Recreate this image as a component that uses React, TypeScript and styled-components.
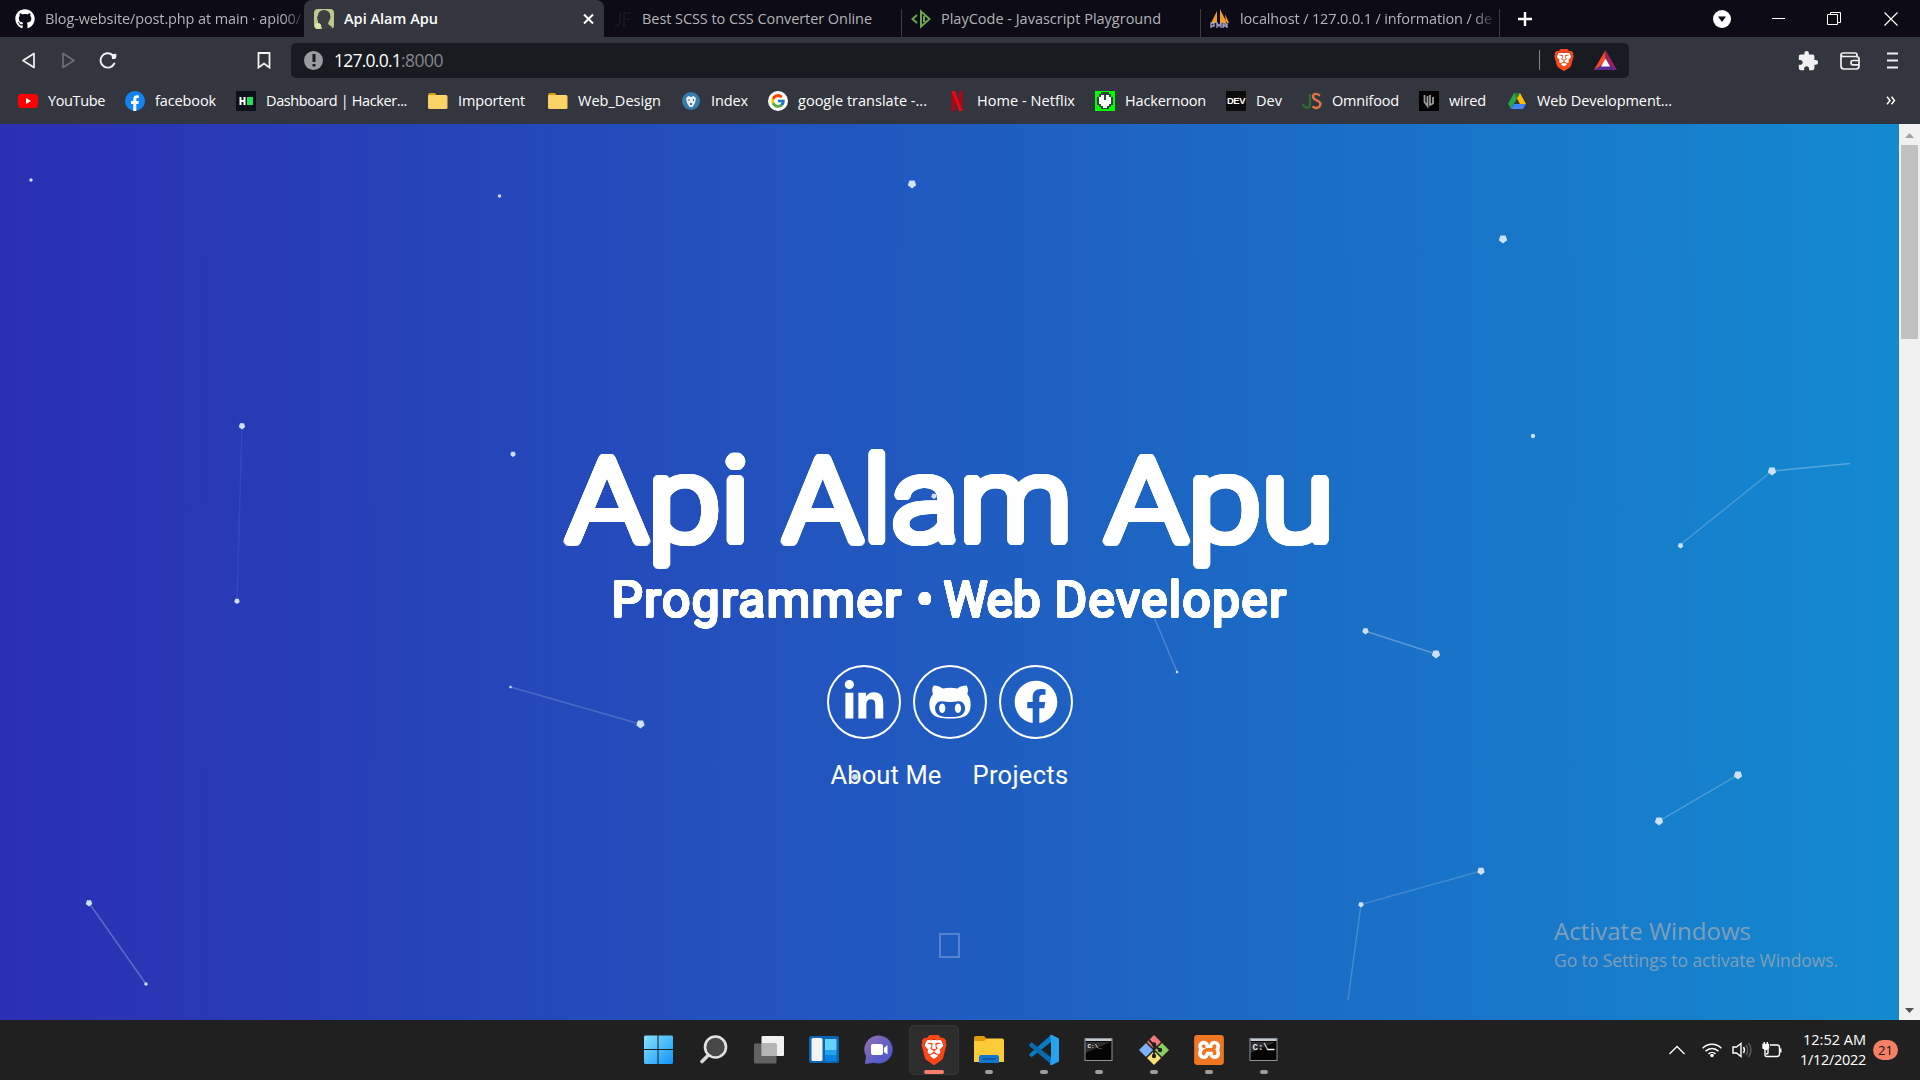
import React, { useLayoutEffect, useRef, useState } from 'react';
import styled, { createGlobalStyle } from 'styled-components';
import { FaLinkedinIn, FaGithubAlt, FaFacebook, FaGithub } from 'react-icons/fa';
import { MdExtension } from 'react-icons/md';
import { SiBrave, SiXampp } from 'react-icons/si';
import { FcGoogle } from 'react-icons/fc';

const ui = `'Open Sans', 'Noto Sans', sans-serif`;

const Global = createGlobalStyle`
  * { box-sizing: border-box; }
  body { margin: 0; background: #202020; overflow: hidden; font-family: ${ui}; }
  svg { display: block; flex: none; }
`;

/* A single line of text that fills a given width, by tracking or by stretching its letters. */
const Line = styled.span`
  display: block;
  flex: none;
  width: max-content;
  white-space: pre;
  transform-origin: 0 50%;
`;
const Fit: React.FC<{ w: number; stretch?: boolean; children: string }> = ({ w, stretch, children }) => {
  const ref = useRef<HTMLSpanElement>(null);
  const [natural, setNatural] = useState(w);
  useLayoutEffect(() => {
    if (ref.current) setNatural(ref.current.getBoundingClientRect().width);
  }, [children]);
  return (
    <Line
      ref={ref}
      style={
        stretch
          ? { transform: `scaleX(${w / natural})`, marginRight: w - natural }
          : { letterSpacing: (w - natural) / children.length }
      }
    >
      {children}
    </Line>
  );
};

const Screen = styled.div`
  width: 1920px;
  height: 1080px;
  display: flex;
  flex-direction: column;
  background: #33353f;
  overflow: hidden;
`;

/* ---------- tab strip ---------- */
const TabStrip = styled.div`
  height: 37px;
  flex: none;
  display: flex;
  background: #0c0b16;
`;
const Tab = styled.div<{ $w: number; $active?: boolean; $line?: boolean; $pad?: number }>`
  width: ${p => p.$w}px;
  height: 37px;
  display: flex;
  align-items: center;
  gap: 10px;
  padding-left: ${p => p.$pad ?? 9}px;
  overflow: hidden;
  font-size: 14.5px;
  font-weight: ${p => (p.$active ? 600 : 400)};
  color: ${p => (p.$active ? '#ffffff' : '#b3b3b8')};
  background: ${p => (p.$active ? '#33353f' : 'transparent')};
  border-radius: ${p => (p.$active ? '8px 8px 0 0' : '0')};
  ${p => p.$line && 'background: linear-gradient(#3c3c42, #3c3c42) right 9px / 1px 28px no-repeat;'}
`;
const FadeText = styled.div<{ $w: number }>`
  width: ${p => p.$w}px;
  overflow: hidden;
  mask-image: linear-gradient(to right, #000 calc(100% - 20px), rgba(0, 0, 0, 0.1));
`;
const Spring = styled.div`
  flex: 1;
`;
const WindowButtons = styled.div`
  display: flex;
  align-items: center;
  flex: 1;
  padding-left: 17px;
`;
const Caption = styled.div<{ $w?: number }>`
  width: ${p => p.$w ?? 56}px;
  display: flex;
  justify-content: center;
`;

/* ---------- toolbar ---------- */
const Toolbar = styled.div`
  height: 47px;
  flex: none;
  display: flex;
  align-items: center;
  padding: 0 22px;
`;
const NavIcons = styled.div`
  width: 269px;
  display: flex;
  align-items: center;
  gap: 27px;
`;
const ReloadSlot = styled.div`
  margin-left: -3px;
`;
const BookmarkSlot = styled.div`
  margin-left: 112px;
`;
const Address = styled.div`
  width: 1338px;
  height: 35px;
  margin-top: -1px;
  border-radius: 5px;
  background: #191b22;
  display: flex;
  align-items: center;
  padding: 0 12px 0 13px;
  font-size: 17.5px;
  color: #ffffff;
`;
const InfoDot = styled.div`
  width: 19px;
  height: 19px;
  border-radius: 50%;
  background: #9b9ca3;
  display: flex;
  align-items: center;
  justify-content: center;
  margin-right: 11px;
`;
const Port = styled.span`
  color: #85868b;
`;
const Rule = styled.div`
  width: 1px;
  height: 20px;
  background: #84858a;
  margin-right: 14px;
`;
const Shields = styled.div`
  display: flex;
  align-items: center;
  gap: 20px;
`;
const Tools = styled.div`
  flex: 1;
  display: flex;
  align-items: center;
  justify-content: flex-end;
  gap: 21px;
  color: #f1f1f1;
`;
const MenuSlot = styled.div`
  margin-left: 5px;
`;

/* ---------- bookmarks ---------- */
const Bookmarks = styled.div`
  height: 40px;
  flex: none;
  display: flex;
  align-items: center;
  gap: 20px;
  padding: 0 24px 7px 18px;
  color: #ffffff;
  font-size: 14.5px;
`;
const Bookmark = styled.div<{ $after: number }>`
  display: flex;
  align-items: center;
  gap: 10px;
  margin-right: ${p => p.$after}px;
`;
const Tile = styled.div`
  width: 20px;
  height: 20px;
  background: #0b0b0b;
  color: #fff;
  font: 700 9.5px 'Liberation Sans', Arial, sans-serif;
  letter-spacing: -0.5px;
  display: flex;
  align-items: center;
  justify-content: center;
`;

/* ---------- page ---------- */
const Viewport = styled.div`
  height: 896px;
  flex: none;
  display: flex;
`;
const Page = styled.div`
  position: relative;
  width: 1899px;
  height: 896px;
  background: linear-gradient(to right, #2b2fb3 0%, #205bc0 50%, #138ad0 100%);
  overflow: hidden;
`;
const ParticleLayer = styled.svg`
  position: absolute;
  inset: 0;
  pointer-events: none;
`;
const Hero = styled.div`
  display: flex;
  flex-direction: column;
  align-items: center;
  padding-top: 308px;
  color: #fff;
  font-family: Roboto, 'Liberation Sans', sans-serif;
`;
const ring = (r: number) =>
  Array.from({ length: 24 }, (_, i) => {
    const a = (i / 24) * Math.PI * 2;
    return `${(r * Math.cos(a)).toFixed(2)}px ${(r * Math.sin(a)).toFixed(2)}px 0 #fff`;
  }).join(',');
const Title = styled.h1`
  margin: 0;
  height: 138px;
  line-height: 139px;
  display: flex;
  gap: 33px;
  font-size: 117px;
  font-weight: 300;
  text-shadow: ${ring(4.2)}, ${ring(2)};
`;
const Subtitle = styled.h2`
  margin: 0;
  height: 60px;
  line-height: 60px;
  display: flex;
  font-size: 49.5px;
  font-weight: 400;
  gap: 14px;
  text-shadow: ${ring(1.2)};
`;
const Social = styled.div`
  display: flex;
  gap: 12px;
  margin-top: 35px;
`;
const Circle = styled.div`
  width: 74px;
  height: 74px;
  border: 2px solid #fff;
  border-radius: 50%;
  display: flex;
  align-items: center;
  justify-content: center;
`;
const Links = styled.div`
  display: flex;
  gap: 31px;
  margin-top: 20px;
  height: 32px;
  line-height: 32px;
  font-size: 25.5px;
`;
const MissingGlyph = styled.div`
  width: 21px;
  height: 25px;
  margin-top: 142px;
  border: 2px solid rgba(255, 255, 255, 0.24);
`;
const Watermark = styled.div`
  position: absolute;
  left: 1554px;
  top: 790px;
  color: #7f9fb8;
  font-size: 24px;
  line-height: 34px;
`;
const WatermarkSmall = styled.div`
  font-size: 17.5px;
  line-height: 25px;
`;
const Scrollbar = styled.div`
  width: 21px;
  background: #f1f1f1;
  display: flex;
  flex-direction: column;
  align-items: center;
  justify-content: space-between;
  padding: 9px 0 7px;
`;
const Thumb = styled.div`
  width: 17px;
  height: 194px;
  background: #c1c1c1;
  margin: 7px 0 auto;
`;

/* ---------- taskbar ---------- */
const Taskbar = styled.div`
  height: 60px;
  flex: none;
  display: flex;
  background: #202020;
  padding-left: 631px;
`;
const TaskItem = styled.div`
  width: 55px;
  height: 60px;
  padding: 5px 2px 5px 3px;
`;
const TaskFace = styled.div<{ $active: boolean }>`
  width: 50px;
  height: 50px;
  border-radius: 5px;
  background: ${p => (p.$active ? '#2d2d2d' : 'transparent')};
  border: 1px solid ${p => (p.$active ? '#353535' : 'transparent')};
  display: flex;
  flex-direction: column;
  align-items: center;
  justify-content: space-between;
  padding-top: 9px;
`;
const Pip = styled.div<{ $kind: 'none' | 'open' | 'active' }>`
  width: ${p => (p.$kind === 'active' ? 20 : 8)}px;
  height: 4px;
  border-radius: 2px;
  background: ${p => ({ none: 'transparent', open: '#9d9d9d', active: '#f68066' })[p.$kind]};
`;
const Tray = styled.div`
  flex: 1;
  display: flex;
  align-items: center;
  justify-content: flex-end;
  padding-right: 22px;
  gap: 10px;
  color: #fff;
`;
const Clock = styled.div`
  width: 76px;
  display: flex;
  flex-direction: column;
  align-items: flex-end;
  font-size: 14.5px;
  line-height: 20px;
  margin: -1px -3px 0 -2px;
`;
const Badge = styled.div`
  width: 25px;
  height: 20px;
  border-radius: 10px;
  background: #f68066;
  color: #111;
  font-size: 13px;
  line-height: 20px;
  text-align: center;
`;

/* ---------- drawings ---------- */
const Portrait = () => (
  <svg width="20" height="20" viewBox="0 0 20 20">
    <rect width="20" height="20" rx="4" fill="#bcc98d" />
    <path d="M5 3q5-4 10 0 3 5 0 9l-1 3 4 3v2H8l-1-4-3-1V12L3 9z" fill="#3c3e40" />
    <circle cx="4" cy="17" r="3" fill="#dbe5ad" />
  </svg>
);
const PlayCode = () => (
  <svg width="20" height="20" viewBox="0 0 20 20" fill="none" stroke="#6aa84b" strokeWidth="2">
    <path d="M6 6L1.500 10 6 14M10 2.500v15L18.500 10z" />
    <path d="M13 7v6" />
  </svg>
);
const Pma = () => (
  <svg width="20" height="20" viewBox="0 0 20 20">
    <path d="M7 2L1 14h6zM10 0v14h7zM15 5l4 9h-3z" fill="#f29a2e" />
    <path d="M1 19v-5h3v3H1M7 19v-5l2 3 2-3v5M13 19v-4h4v4M13 17h4" fill="none" stroke="#a7a9cf" strokeWidth="1.300" />
  </svg>
);
const YouTube = () => (
  <svg width="20" height="20" viewBox="0 0 20 20">
    <rect y="3" width="20" height="14" rx="3.500" fill="#f00" />
    <path d="M8 7l5 3-5 3z" fill="#fff" />
  </svg>
);
const Facebook = () => (
  <svg width="20" height="20" viewBox="0 0 20 20">
    <circle cx="10" cy="10" r="10" fill="#1184f2" />
    <path d="M8.300 20v-7H6v-3h2.300V8c0-2.600 1.500-3.800 3.600-3.800l2 .2V7h-1.200c-1.100 0-1.400.7-1.400 1.400V10h2.500l-.4 3h-2.100v7z" fill="#fff" />
  </svg>
);
const Folder = () => (
  <svg width="20" height="16" viewBox="0 0 20 16">
    <path d="M0 2q0-2 2-2h5l2 3h9v12H0z" fill="#d99a12" />
    <rect y="2" width="19.500" height="14" rx="1.500" fill="#fbd266" />
  </svg>
);
const IndexIcon = () => (
  <svg width="20" height="20" viewBox="0 0 20 20">
    <circle cx="10" cy="10" r="9" fill="#357eac" />
    <path d="M5 7l2.500-2L10 6l2.500-1L15 7l-1 5-2.500 4h-3L6 12z" fill="#e8eff4" />
    <path d="M7.500 9h1M12 9h1M10 12v2" stroke="#333" strokeWidth="1.500" />
  </svg>
);
const Netflix = () => (
  <svg width="20" height="20" viewBox="0 0 20 20">
    <path d="M4.500 0H8v20H4.500zM12 0h3.500v20H12z" fill="#b1060f" />
    <path d="M4.500 0H8l7.500 20H12z" fill="#e50914" />
  </svg>
);
const Hackernoon = () => (
  <svg width="20" height="20" viewBox="0 0 20 20">
    <rect width="20" height="20" fill="#0f0" />
    <path d="M6 1h8v2h2v3h2v8h-2v2h-2v2H6v-2H4v-2H2V6h2V3h2z" fill="#31453a" />
    <path d="M6 4h3v5h2V4h3v2h2v7h-2v2h-2v2H8v-2H6v-2H4V6h2z" fill="#fff" />
  </svg>
);
const Drive = () => (
  <svg width="20" height="20" viewBox="0 0 20 20">
    <path d="M7 2l3 5.500L4 18 1 12.800z" fill="#2ba24c" />
    <path d="M7 2h6l6 11h-6z" fill="#fbbc05" />
    <path d="M7 13h12l-3 5H4z" fill="#4285f4" />
    <path d="M7 2h6l-3 5.500z" fill="#188038" />
  </svg>
);
const Bat = () => (
  <svg width="23" height="20" viewBox="0 0 23 20">
    <path d="M11.500 0L0 20l11.500-7z" fill="#ff4724" />
    <path d="M11.500 0L23 20l-11.500-7z" fill="#9e1f63" />
    <path d="M0 20h23l-11.500-8z" fill="#5c2d91" />
    <path d="M11.500 8.500l4.500 8H7z" fill="#fff" />
  </svg>
);
const Lion = ({ w, h }: { w: number; h: number }) => (
  <svg width={w} height={h} viewBox="1.400 0 21.200 24" preserveAspectRatio="none">
    <path d="M6 4h12l2 5-4 10-4 2.500L8 19 4 9z" fill="#fff" />
    <SiBrave size={24} color="#fb4618" />
  </svg>
);
const CmdIcon = ({ big }: { big?: boolean }) => (
  <svg width="30" height="30" viewBox="0 0 30 30">
    <rect x="1" y="3.500" width="27" height="22" fill="#050505" stroke="#8e9499" />
    <path d="M1.500 5h26" stroke="#c5cbd0" strokeWidth="2" />
    <path d="M1.500 7h25L1.500 18z" fill="#fff" opacity=".16" />
    <text x="3.500" y={big ? 15 : 12.5} fill="#e8e8e8" fontFamily="Liberation Mono, monospace" fontSize={big ? 9 : 6} fontWeight="700">
      {big ? 'C:\\' : 'C:\\_'}
    </text>
    {big && <path d="M18.500 14.500h7" stroke="#fff" strokeWidth="1.500" />}
  </svg>
);

const icons = {
  start: (
    <svg width="30" height="30" viewBox="0 0 30 30">
      <defs>
        <linearGradient id="win" x2="1" y2="1" gradientUnits="userSpaceOnUse" gradientTransform="scale(30)">
          <stop stopColor="#8be3ff" />
          <stop offset="1" stopColor="#0a92f5" />
        </linearGradient>
      </defs>
      <path d="M1 .5H13.500V14H0V1.500zM14.500.5H28L29 1.500V14H14.500zM0 15H13.500v14H1L0 28zM14.500 15H29v13l-1 1H14.500z" fill="url(#win)" />
    </svg>
  ),
  search: (
    <svg width="30" height="30" viewBox="0 0 30 30" fill="none">
      <path d="M10.500 19L3 26.500" stroke="#d5d7d9" strokeWidth="3.600" strokeLinecap="round" />
      <circle cx="16.500" cy="12" r="10.500" fill="#474747" stroke="#e0e2e4" strokeWidth="2.600" />
    </svg>
  ),
  view: (
    <svg width="30" height="30" viewBox="0 0 30 30">
      <rect x="7.500" y="1" width="22.500" height="20" rx="1" fill="#f1f1f1" />
      <rect y="8.500" width="22.500" height="20" rx="1" fill="#6f6f6f" opacity=".85" />
      <path d="M7.500 8.500h15V21h-15z" fill="#b5b5b5" />
    </svg>
  ),
  widgets: (
    <svg width="30" height="30" viewBox="0 0 30 30">
      <rect y="1" width="30" height="27" rx="2" fill="#0a66b0" />
      <rect x="2.500" y="3" width="11" height="23" rx="1.500" fill="#f3f3f3" />
      <path d="M16 4h11.500v11.500H16z" fill="#62d3fb" />
      <path d="M16 16h11.500v4.500H16z" fill="#1fa4f5" />
      <path d="M16 21h11.500v5H16z" fill="#0a84e4" />
    </svg>
  ),
  chat: (
    <svg width="30" height="30" viewBox="0 0 30 30">
      <defs>
        <linearGradient id="chat" x2="1" y2="1">
          <stop stopColor="#9a6fae" />
          <stop offset=".6" stopColor="#5c5fc8" />
          <stop offset="1" stopColor="#5157c4" />
        </linearGradient>
      </defs>
      <path d="M15 .5a14 14 0 1 1-5 27.200L1 29l1-8A14 14 0 0 1 15 .5z" fill="url(#chat)" />
      <rect x="7" y="9" width="12" height="11" rx="2" fill="#fff" />
      <path d="M20 13l3.500-3v9.500L20 17z" fill="#fff" />
    </svg>
  ),
  brave: <Lion w={26} h={30} />,
  files: (
    <svg width="30" height="30" viewBox="0 0 30 30">
      <path d="M0 3q0-2 2-2h8l3 3-2 3H0z" fill="#dd9b0a" />
      <path d="M0 6h10l3-2.500h15q2 0 2 2V27H0z" fill="#fccb3a" />
      <path d="M5 28v-6q0-2 2-2h16q2 0 2 2v6z" fill="#1477cf" />
      <path d="M8.500 24h13" stroke="#0a4b8d" strokeWidth="1.200" />
    </svg>
  ),
  code: (
    <svg width="30" height="30" viewBox="0 0 30 30">
      <path d="M0 20l2.500 2.300L22 7V0L1 18.500z" fill="#0a7bc4" />
      <path d="M0 9.500l2.500-2.200L23 23v7L1 11.500z" fill="#0a6ab0" />
      <path d="M21 0l1 7v16l-1 7 2 0 7-3.500v-23L23 0z" fill="#26a3ee" />
    </svg>
  ),
  git: (
    <svg width="30" height="30" viewBox="0 0 30 30">
      <path d="M15 0l7.500 7.500L15 15 7.500 7.500z" fill="#f0787c" />
      <path d="M22.500 7.500L30 15l-7.500 7.500L15 15z" fill="#8bd160" />
      <path d="M7.500 7.500L15 15l-7.500 7.500L0 15z" fill="#7fb0fb" />
      <path d="M15 15l7.500 7.500L15 30l-7.500-7.500z" fill="#fbdf78" />
      <path d="M7 7l16 16M23 7L7 23" stroke="#202020" strokeWidth="1.500" />
      <path d="M10 5l5 5v11M15 10l6 5" stroke="#202020" strokeWidth="1.800" fill="none" />
      <circle cx="15" cy="9.500" r="2.200" fill="#202020" />
      <circle cx="21" cy="15" r="2.200" fill="#202020" />
      <circle cx="15" cy="21" r="2.200" fill="#202020" />
    </svg>
  ),
  xampp: (
    <svg width="30" height="30" viewBox="0 0 30 30">
      <rect x="1" y="1" width="28" height="28" rx="4" fill="#fff" />
      <SiXampp size={30} color="#ef7622" />
    </svg>
  ),
  cmd: <CmdIcon />,
  cmdBig: <CmdIcon big />,
};

const taskApps: { id: keyof typeof icons; pip: 'none' | 'open' | 'active' }[] = [
  { id: 'start', pip: 'none' },
  { id: 'search', pip: 'none' },
  { id: 'view', pip: 'none' },
  { id: 'widgets', pip: 'none' },
  { id: 'chat', pip: 'none' },
  { id: 'brave', pip: 'active' },
  { id: 'files', pip: 'open' },
  { id: 'code', pip: 'open' },
  { id: 'cmd', pip: 'open' },
  { id: 'git', pip: 'open' },
  { id: 'xampp', pip: 'open' },
  { id: 'cmdBig', pip: 'open' },
];

const bookmarks: { icon: React.ReactNode; label: string; w: number; after?: number }[] = [
  { icon: <YouTube />, label: 'YouTube', w: 57 },
  { icon: <Facebook />, label: 'facebook', w: 61 },
  {
    icon: (
      <svg width="20" height="20" viewBox="0 0 20 20">
        <rect width="20" height="20" fill="#0b1019" />
        <path d="M4.500 6v8M8.500 6v8M4.500 10h4" stroke="#fff" strokeWidth="2" />
        <path d="M11 6h6v8h-6z" fill="#1fe05b" />
      </svg>
    ),
    label: 'Dashboard | Hacker...',
    w: 141,
    after: 1,
  },
  { icon: <Folder />, label: 'Importent', w: 67, after: 3 },
  { icon: <Folder />, label: 'Web_Design', w: 83 },
  { icon: <IndexIcon />, label: 'Index', w: 37 },
  {
    icon: (
      <svg width="20" height="20" viewBox="0 0 20 20">
        <circle cx="10" cy="10" r="10" fill="#fff" />
        <g transform="translate(2 2)">
          <FcGoogle size={16} />
        </g>
      </svg>
    ),
    label: 'google translate -...',
    w: 129,
  },
  { icon: <Netflix />, label: 'Home - Netflix', w: 98 },
  { icon: <Hackernoon />, label: 'Hackernoon', w: 81 },
  { icon: <Tile>DEV</Tile>, label: 'Dev', w: 26 },
  {
    icon: (
      <svg width="20" height="20" viewBox="0 0 20 20" fill="none" strokeWidth="2.400">
        <path d="M8 3v10q0 4-3.500 3.500T1 13" stroke="#2f6b37" />
        <path d="M18 4.500q-6-3.500-7 .5 0 3 4 4.500 5 2 2.500 6-3 3-7 0" stroke="#e8743e" />
      </svg>
    ),
    label: 'Omnifood',
    w: 67,
  },
  {
    icon: (
      <svg width="20" height="20" viewBox="0 0 20 20">
        <rect width="20" height="20" fill="#000" />
        <path d="M5.500 4v7l3 4V5M11 4v10l3-1.500V6" fill="none" stroke="#9a9a9a" strokeWidth="1.800" />
      </svg>
    ),
    label: 'wired',
    w: 37,
    after: 1,
  },
  { icon: <Drive />, label: 'Web Development...', w: 135 },
];

const dots: [number, number, number][] = [
  [31, 180, 1.5], [499.5, 196, 1.5], [912, 184, 4], [1503, 239, 4], [242, 426, 3], [237, 601, 2.5],
  [513, 454, 2.5], [510.5, 687, 1], [640.5, 724, 4], [89, 903, 3], [146, 984, 1.5], [934, 496, 2.5],
  [855, 777, 3], [1177, 672, 1], [1533, 436, 2], [1772, 471, 4], [1680.5, 545.5, 2.5],
  [1365.5, 631, 3], [1436, 654, 4], [1738, 775, 4], [1659, 821, 4], [1481, 871, 3.5], [1361, 904.5, 2.5],
];
const links: [number, number, number, number, number][] = [
  [242, 426, 237, 600, 0.07], [510.5, 687, 640, 724, 0.18], [89, 903, 146, 984, 0.26], [1144, 593, 1177, 672, 0.22],
  [1772, 471, 1680, 545, 0.22], [1772, 471, 1850, 463.5, 0.28], [1365, 631, 1436, 654, 0.28], [1738, 775, 1659, 821, 0.26],
  [1481, 871, 1361, 904.5, 0.16], [1361, 904.5, 1348, 1000, 0.2],
];
const pentagon = (x: number, y: number, r: number) =>
  Array.from({ length: 5 }, (_, i) => {
    const a = Math.PI / 2 + (i * Math.PI * 2) / 5;
    return `${x + r * Math.cos(a)},${y + r * Math.sin(a)}`;
  }).join(' ');

export default function App() {
  return (
    <Screen>
      <Global />
      <TabStrip>
        <Tab $w={304} $pad={15}>
          <FaGithub size={20} color="#fff" />
          <FadeText $w={258}>
            <Fit w={256}>Blog-website/post.php at main · api00/</Fit>
          </FadeText>
        </Tab>
        <Tab $w={300} $active $pad={10}>
          <Portrait />
          <Fit w={94}>Api Alam Apu</Fit>
          <Spring />
          <svg width="30" height="12" viewBox="0 0 30 12" stroke="#fff" strokeWidth="2">
            <path d="M10 1.500l9 9M19 1.500l-9 9" />
          </svg>
        </Tab>
        <Tab $w={298} $line $pad={8}>
          <svg width="20" height="20" viewBox="0 0 20 20" fill="none" stroke="#1b1b21" strokeWidth="1.600">
            <path d="M8 4v9q0 4-5 4M12 18V4h7M12 10h6" />
          </svg>
          <Fit w={230}>Best SCSS to CSS Converter Online</Fit>
        </Tab>
        <Tab $w={299} $line>
          <PlayCode />
          <Fit w={220}>PlayCode - Javascript Playground</Fit>
        </Tab>
        <Tab $w={299} $line>
          <Pma />
          <FadeText $w={254}>
            <Fit w={252}>localhost / 127.0.0.1 / information / de</Fit>
          </FadeText>
        </Tab>
        <WindowButtons>
          <svg width="16" height="16" viewBox="0 0 16 16" stroke="#fff" strokeWidth="2.400">
            <path d="M8 1v14M1 8h14" />
          </svg>
          <Spring />
          <Caption>
            <svg width="18" height="18" viewBox="0 0 18 18">
              <circle cx="9" cy="9" r="9" fill="#fff" />
              <path d="M5 6.500h8L9 12z" fill="#0c0b16" />
            </svg>
          </Caption>
          <Caption>
            <svg width="13" height="13" viewBox="0 0 13 13" stroke="#fff">
              <path d="M0 6.500h13" />
            </svg>
          </Caption>
          <Caption>
            <svg width="14" height="13" viewBox="0 0 14 13" stroke="#fff" fill="none">
              <path d="M.5 2.500h10v10H.5zM3.500 2.500v-2h10v10h-3" />
            </svg>
          </Caption>
          <Caption $w={58}>
            <svg width="14" height="14" viewBox="0 0 14 14" stroke="#fff" strokeWidth="1.200">
              <path d="M.5.5l13 13M13.500.5l-13 13" />
            </svg>
          </Caption>
        </WindowButtons>
      </TabStrip>

      <Toolbar>
        <NavIcons>
          <svg width="13" height="17" viewBox="0 0 13 17" fill="none" stroke="#f3f3f3" strokeWidth="1.700" strokeLinejoin="round">
            <path d="M12 1.500v14L1 8.500z" />
          </svg>
          <svg width="13" height="17" viewBox="0 0 13 17" fill="none" stroke="#6c6e77" strokeWidth="1.700" strokeLinejoin="round">
            <path d="M1 1.500v14l11-7z" />
          </svg>
          <ReloadSlot>
            <svg width="19" height="18" viewBox="0 0 19 18" fill="none" stroke="#f3f3f3" strokeWidth="1.900" strokeLinecap="round">
              <path d="M13.500 3A7.200 7.200 0 1 0 15.300 11.500" />
              <path d="M12.300 2.200L17.300 1.800V5q0 2-2 2h-2.200z" fill="#f3f3f3" stroke="none" />
            </svg>
          </ReloadSlot>
          <BookmarkSlot>
            <svg width="14" height="17" viewBox="0 0 14 17" fill="none" stroke="#f3f3f3" strokeWidth="1.800">
              <path d="M1.500 1h11v14.500L7 11.500l-5.500 4z" />
            </svg>
          </BookmarkSlot>
        </NavIcons>
        <Address>
          <InfoDot>
            <svg width="4" height="13" viewBox="0 0 4 13" fill="#191b22">
              <path d="M.5 0h3v8h-3zM.5 10h3v2.500h-3z" />
            </svg>
          </InfoDot>
          <Fit w={67}>127.0.0.1</Fit>
          <Port>
            <Fit w={42}>:8000</Fit>
          </Port>
          <Spring />
          <Rule />
          <Shields>
            <Lion w={20} h={22} />
            <Bat />
          </Shields>
        </Address>
        <Tools>
          <MdExtension size={22} />
          <svg width="20" height="18" viewBox="0 0 20 18" fill="none" stroke="#f1f1f1" strokeWidth="1.700">
            <path d="M17 4.500V3q0-2-2-2H3Q1 1 1 3v11q0 3 3 3h12q3 0 3-3V7q0-2.500-3-2.500H3.500Q1 4.500 1 2.500M19 8.500h-6q-2 0-2 2.200t2 2.200h6" />
          </svg>
          <MenuSlot>
            <svg width="12" height="17" viewBox="0 0 12 17" stroke="#f1f1f1" strokeWidth="1.800">
              <path d="M1 1.500h11M1 8.500h11M1 15.500h11" />
            </svg>
          </MenuSlot>
        </Tools>
      </Toolbar>

      <Bookmarks>
        {bookmarks.map(b => (
          <Bookmark key={b.label} $after={b.after ?? 0}>
            {b.icon}
            <Fit w={b.w}>{b.label}</Fit>
          </Bookmark>
        ))}
        <Spring />
        <svg width="10" height="9" viewBox="0 0 10 9" fill="none" stroke="#fff" strokeWidth="1.500">
          <path d="M1 .8l3 3.700-3 3.700M5.500.8l3 3.700-3 3.700" />
        </svg>
      </Bookmarks>

      <Viewport>
        <Page>
          <Hero>
            <Title>
              <Fit stretch w={184}>Api</Fit>
              <Fit stretch w={289}>Alam</Fit>
              <Fit stretch w={229}>Apu</Fit>
            </Title>
            <Subtitle>
              <Fit w={291}>Programmer</Fit>
              <Fit w={13}>•</Fit>
              <Fit w={97}>Web</Fit>
              <Fit w={233}>Developer</Fit>
            </Subtitle>
            <Social>
              <Circle>
                <FaLinkedinIn size={44} />
              </Circle>
              <Circle>
                <FaGithubAlt size={44} />
              </Circle>
              <Circle>
                <FaFacebook size={44} />
              </Circle>
            </Social>
            <Links>
              <Fit w={111}>About Me</Fit>
              <Fit w={96}>Projects</Fit>
            </Links>
            <MissingGlyph />
          </Hero>
          <ParticleLayer width="1899" height="896" viewBox="0 124 1899 896">
            {links.map(([x1, y1, x2, y2, o]) => (
              <line key={`${x1}-${x2}-${y2}`} x1={x1} y1={y1} x2={x2} y2={y2} stroke="#fff" strokeOpacity={o} strokeWidth="1.400" />
            ))}
            {dots.map(([x, y, r]) => (
              <polygon key={`${x}`} points={pentagon(x, y, r + 0.4)} fill="#cfe0f3" />
            ))}
          </ParticleLayer>
          <Watermark>
            <Fit w={197}>Activate Windows</Fit>
            <WatermarkSmall>
              <Fit w={284}>Go to Settings to activate Windows.</Fit>
            </WatermarkSmall>
          </Watermark>
        </Page>
        <Scrollbar>
          <svg width="9" height="5" viewBox="0 0 9 5">
            <path d="M0 5h9L4.500 0z" fill="#a3a3a3" />
          </svg>
          <Thumb />
          <svg width="9" height="5" viewBox="0 0 9 5">
            <path d="M0 0h9L4.500 5z" fill="#505050" />
          </svg>
        </Scrollbar>
      </Viewport>

      <Taskbar>
        {taskApps.map(a => (
          <TaskItem key={a.id}>
            <TaskFace $active={a.pip === 'active'}>
              {icons[a.id]}
              <Pip $kind={a.pip} />
            </TaskFace>
          </TaskItem>
        ))}
        <Tray>
          <svg width="16" height="10" viewBox="0 0 16 10" fill="none" stroke="#fff" strokeWidth="1.300">
            <path d="M.5 9L8 1.500 15.500 9" />
          </svg>
          <svg width="27" height="16" viewBox="-7 0 27 16" fill="none" stroke="#fff" strokeWidth="1.500">
            <path d="M.7 6.200a13 13 0 0 1 18.600 0M3.500 9.200a9 9 0 0 1 13 0M6.500 12a5 5 0 0 1 7 0" />
            <circle cx="10" cy="13.500" r="1.800" fill="#fff" stroke="none" />
          </svg>
          <svg width="20" height="16" viewBox="0 0 20 16" fill="none" stroke="#fff" strokeWidth="1.400">
            <path d="M1 5h3.500L9 1.500v13L4.500 11H1z" />
            <path d="M11.500 5q2 3 0 6" />
            <path d="M14 3q3.500 5 0 10M16.500 1q5 7 0 14" stroke="#5c5c5c" />
          </svg>
          <svg width="20" height="17" viewBox="0 0 20 17" fill="none" stroke="#fff" strokeWidth="1.400">
            <path d="M8 3h7q2.500 0 2.500 2v7q0 2.500-2.500 2.500H4.500q-1.500 0-1.500-2V7" />
            <path d="M1 2.500h5.500V6L4 7.500 1 6zM2.200 0v3M5.300 0v3" fill="#fff" />
            <path d="M6 7v3.500q0 1.500-2 1.500" />
            <path d="M18.500 6.500v4" strokeWidth="2" />
          </svg>
          <Clock>
            <Fit w={63}>12:52 AM</Fit>
            <Fit w={66}>1/12/2022</Fit>
          </Clock>
          <Badge>21</Badge>
        </Tray>
      </Taskbar>
    </Screen>
  );
}
